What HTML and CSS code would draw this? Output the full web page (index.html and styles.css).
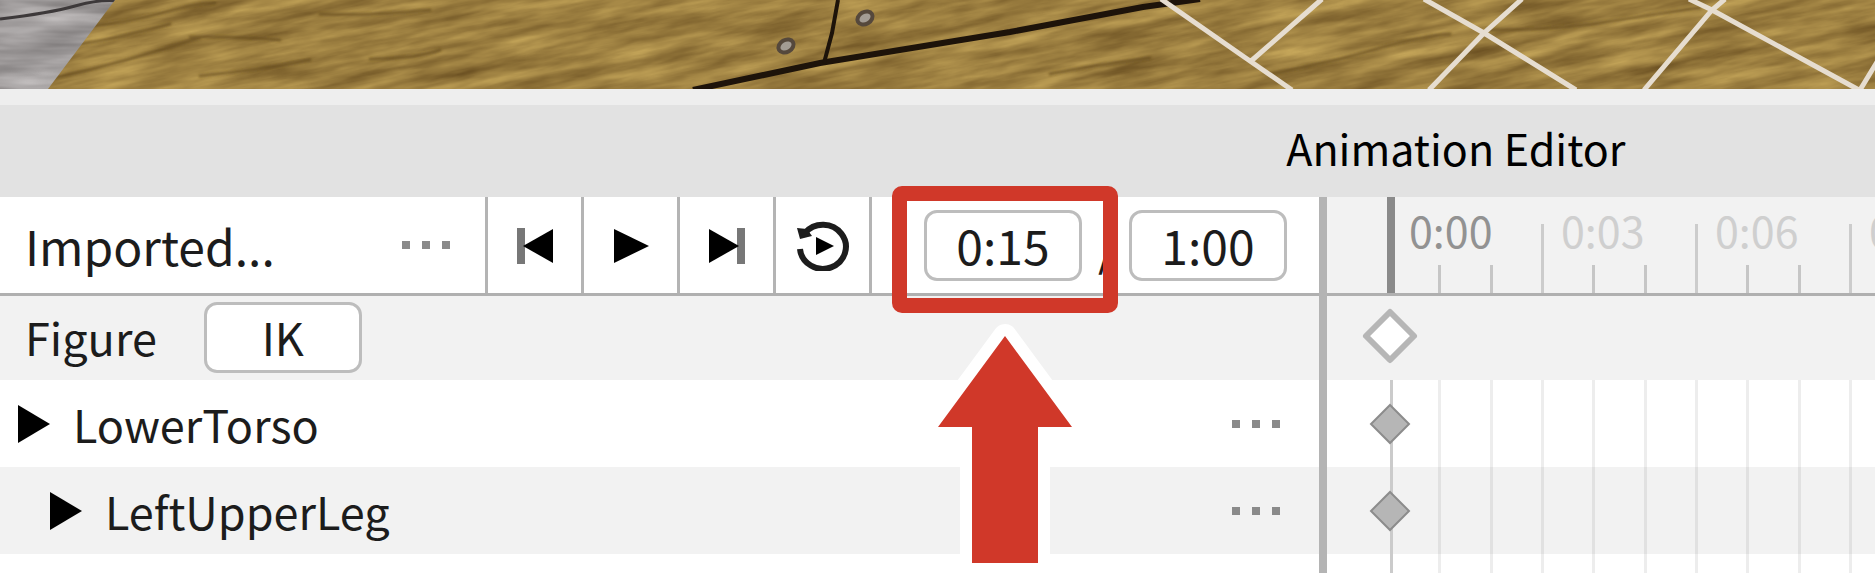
FILE: index.html
```html
<!DOCTYPE html>
<html lang="en">
<head>
<meta charset="utf-8">
<title>Animation Editor</title>
<link rel="stylesheet" href="styles.css">
</head>
<body>
<svg class="scene" viewBox="0 0 1875 89" preserveAspectRatio="xMidYMid slice" aria-hidden="true">
  <defs>
    <filter id="wood" x="0" y="0" width="1" height="1" color-interpolation-filters="sRGB">
      <feTurbulence type="fractalNoise" baseFrequency="0.012 0.08" numOctaves="4" seed="8"/>
      <feColorMatrix values="0.42 0 0 0 0.4  0.4 0 0 0 0.295  0.26 0 0 0 0.12  0 0 0 0 1"/>
    </filter>
    <filter id="stone" x="0" y="0" width="1" height="1" color-interpolation-filters="sRGB">
      <feTurbulence type="fractalNoise" baseFrequency="0.012 0.08" numOctaves="3" seed="3"/>
      <feColorMatrix values="0.35 0 0 0 0.44  0.35 0 0 0 0.425  0.35 0 0 0 0.425  0 0 0 0 1"/>
    </filter>
    <filter id="soft" x="-5%" y="-20%" width="110%" height="140%"><feGaussianBlur stdDeviation="1"/></filter>
    <clipPath id="slab"><path d="M0 0H115L48 89H0Z"/></clipPath>
  </defs>
  <rect width="1875" height="89" fill="#9c7f40"/>
  <g transform="rotate(-11 937 44)"><rect x="-50" y="-200" width="1980" height="480" filter="url(#wood)"/></g>
  <g fill="none" stroke="#60461a" stroke-width="3" stroke-linecap="round" opacity=".6" filter="url(#soft)">
    <path d="M52 78Q100 68 150 53T200 38M92 26Q130 22 165 12T215 3M80 44Q120 38 170 24M190 37Q230 36 280 40M320 14Q370 16 430 10M200 76Q260 70 310 60M370 59Q420 58 440 50M1270 74Q1340 60 1380 48T1450 34M1490 30Q1560 30 1620 20T1700 8M1050 74Q1100 64 1150 58"/>
  </g>
  <g clip-path="url(#slab)">
    <rect width="120" height="89" filter="url(#stone)"/>
    <path d="M0 19Q50 13 75 6T118 1" fill="none" stroke="#3d393a" stroke-width="3"/>
  </g>
  <g fill="none" stroke="#1d130a">
    <path d="M693 90L820 63L1010 32L1143 7L1200 -1" stroke-width="6"/>
    <path d="M838 0L832 33L824 63" stroke-width="4"/>
  </g>
  <g stroke="#55483c" stroke-width="4" fill="#a39c94">
    <ellipse cx="865" cy="18" rx="8" ry="6" transform="rotate(-30 865 18)"/>
    <ellipse cx="786" cy="46" rx="8" ry="6" transform="rotate(-30 786 46)"/>
  </g>
  <g fill="none" stroke="#e6ddd0" stroke-width="5">
    <path d="M1161 -1L1250 61L1292 90M1322 -1L1250 62M1424 -1L1484 33L1576 90M1522 -1L1484 33L1429 90M1689 -1L1712 10L1859 90M1725 -1L1712 10L1644 90M1877 62L1860 90"/>
  </g>
</svg>

<header class="titlebar"><h1 class="title">Animation Editor</h1></header>

<main class="editor">
  <section class="tracks">
    <div class="toolbar">
      <span class="clip-name">Imported...</span>
      <button class="more" aria-label="Clip options"><i></i><i></i><i></i></button>
      <div class="transport">
        <button class="tool" aria-label="Go to first frame"><svg width="36" height="36" viewBox="0 0 36 36"><path fill="#777" d="M0 0H8V36H0Z"/><path d="M36 1V35L6 18Z"/></svg></button>
        <button class="tool" aria-label="Play"><svg width="36" height="36" viewBox="0 0 36 36"><path d="M1 1V35L36 18Z"/></svg></button>
        <button class="tool" aria-label="Go to last frame"><svg width="36" height="36" viewBox="0 0 36 36"><path fill="#777" d="M28 0H36V36H28Z"/><path d="M0 1V35L30 18Z"/></svg></button>
        <button class="tool" aria-label="Loop"><svg width="54" height="50" viewBox="0 0 54 50"><path d="M4 28A23 22 0 1 0 9 12" fill="none" stroke="#1c1c1c" stroke-width="6"/><path d="M1 7L4 18L16 15L11 8Z" fill="#1c1c1c"/><path d="M20 16V34L38 25Z"/></svg></button>
      </div>
      <div class="times">
        <div class="current">
          <input class="box" type="text" value="0:15" aria-label="Current time">
          <span class="callout"></span>
          <svg class="arrow" width="180" height="262" viewBox="0 0 180 262" aria-hidden="true"><path d="M90 24L157 115H123V251H57V115H23Z" fill="none" stroke="#fff" stroke-width="24" stroke-linejoin="round"/><path d="M90 24L157 115H123V251H57V115H23Z" fill="#d03829"/></svg>
        </div>
        <span class="slash">/</span>
        <input class="box" type="text" value="1:00" aria-label="Clip length">
      </div>
    </div>
    <div class="row figure"><span>Figure</span><button class="box">IK</button></div>
    <div class="row plain">
      <button class="expand" aria-label="Expand LowerTorso"><svg width="32" height="38" viewBox="0 0 32 38"><path d="M0 0V38L32 19Z"/></svg></button>
      <span class="joint">LowerTorso</span>
      <button class="more" aria-label="LowerTorso options"><i></i><i></i><i></i></button>
    </div>
    <div class="row child">
      <button class="expand" aria-label="Expand LeftUpperLeg"><svg width="32" height="38" viewBox="0 0 32 38"><path d="M0 0V38L32 19Z"/></svg></button>
      <span class="joint">LeftUpperLeg</span>
      <button class="more" aria-label="LeftUpperLeg options"><i></i><i></i><i></i></button>
    </div>
  </section>
  <div class="divider"></div>
  <section class="timeline">
    <div class="ruler">
      <span class="playhead"></span>
      <span class="beat now">0:00</span>
      <span class="beat">0:03</span>
      <span class="beat">0:06</span>
      <span class="beat">0:09</span>
    </div>
    <div class="lane summary"><svg class="key" width="58" height="58" viewBox="0 0 58 58"><path d="M29 5L53 29L29 53L5 29Z" fill="#fff" stroke="#b6b6b6" stroke-width="6" stroke-linejoin="round"/></svg></div>
    <div class="lane plain grid"><svg class="key" width="42" height="42" viewBox="0 0 42 42"><path d="M21 2L40 21L21 40L2 21Z" fill="#b6b6b6" stroke="#8c8c8c" stroke-width="2"/></svg></div>
    <div class="lane grid"><svg class="key" width="42" height="42" viewBox="0 0 42 42"><path d="M21 2L40 21L21 40L2 21Z" fill="#b6b6b6" stroke="#8c8c8c" stroke-width="2"/></svg></div>
    <div class="lane plain grid rest"></div>
  </section>
</main>
</body>
</html>
```
FILE: styles.css
```css
* { box-sizing: border-box; }

body {
  margin: 0;
  min-height: 100vh;
  display: flex;
  flex-direction: column;
  overflow: hidden;
  background: #fff;
  color: #1c1c1c;
  font: 48px/64px "Noto Sans CJK SC", "Noto Sans", sans-serif;
}

button, input {
  margin: 0;
  padding: 0;
  border: 0;
  background: none;
  color: inherit;
  font: inherit;
}

svg { display: block; }

.scene {
  width: 100%;
  height: 89px;
  flex: none;
}

.titlebar {
  height: 108px;
  flex: none;
  display: flex;
  align-items: center;
  padding: 0 0 8px 68.6%;
  border-top: 16px solid #eee;
  background: #e2e2e2;
}

.title {
  margin: 0;
  color: #000;
  font-size: 43px;
  font-weight: 400;
  white-space: nowrap;
}

.editor {
  flex: 1;
  display: grid;
  grid-template-columns: minmax(0, 1319fr) 8px minmax(0, 548fr);
}

.divider { background: #b4b4b4; }

.toolbar, .ruler {
  height: 99px;
  display: flex;
  border-bottom: 3px solid #b0b0b0;
}

.toolbar {
  align-items: center;
  padding-left: 25px;
}

.clip-name { flex: 1; }

.more {
  display: flex;
  gap: 12px;
  padding: 8px 0;
}

.more i {
  width: 8px;
  height: 8px;
  background: #8a8a8a;
}

.transport {
  align-self: stretch;
  display: flex;
  margin-left: 35px;
  border-left: 3px solid #b4b4b4;
}

.tool {
  width: 96px;
  display: flex;
  align-items: center;
  justify-content: center;
  padding-top: 2px;
  border-right: 3px solid #b4b4b4;
}

.times {
  display: flex;
  align-items: center;
  padding: 0 32px 0 52px;
}

.box {
  display: block;
  width: 158px;
  height: 71px;
  padding-bottom: 3px;
  border: 3px solid #bdbdbd;
  border-radius: 13px;
  background: #fff;
  text-align: center;
}

.slash {
  width: 47px;
  padding-left: 4px;
  text-align: center;
}

.current { position: relative; }

.callout {
  position: absolute;
  inset: -24px -36px -32px -32px;
  border: 15px solid #d03829;
  border-radius: 10px;
  z-index: 1;
}

.arrow {
  position: absolute;
  top: 102px;
  left: -9px;
}

.row, .lane { height: 87px; background: #f2f2f2; }

.row {
  display: flex;
  align-items: center;
  padding-right: 39px;
  font-size: 45px;
}

.figure {
  height: 84px;
  gap: 47px;
  padding: 0 25px 2px;
}

.summary { height: 84px; padding-bottom: 4px; }

.row.plain, .lane.plain { background-color: #fff; }

.row.plain { padding-left: 18px; }

.child { padding-left: 50px; }

.joint {
  flex: 1;
  padding-left: 23px;
}

.timeline {
  overflow: hidden;
  display: flex;
  flex-direction: column;
}

.ruler {
  position: relative;
  flex: none;
  padding-left: 60px;
  background: #f2f2f2;
}

.playhead {
  position: absolute;
  top: 0;
  bottom: 0;
  left: 60px;
  width: 8px;
  background: #8a8a8a;
}

.beat {
  flex: 0 0 154px;
  padding-left: 20px;
  color: #cfcfcf;
  font-size: 43px;
  background:
    linear-gradient(#ccc, #ccc) 0 100% / 3px 69px no-repeat,
    linear-gradient(#c6c6c6, #c6c6c6) 51px 100% / 3px 28px no-repeat,
    linear-gradient(#c6c6c6, #c6c6c6) 103px 100% / 3px 28px no-repeat;
}

.now { padding-left: 22px; color: #929292; }

.lane {
  display: flex;
  align-items: center;
  flex: none;
}

.key { margin-left: 42px; }

.summary .key { margin-left: 34px; }

/* One vertical line per frame; the origin line is darker and nothing is drawn before it. */
.grid {
  background-image:
    linear-gradient(#cbcbcb, #cbcbcb),
    linear-gradient(#f2f2f2, #f2f2f2),
    linear-gradient(90deg, rgba(0, 0, 0, .07) 3px, transparent 3px 51px, rgba(0, 0, 0, .07) 51px 54px, transparent 54px 103px, rgba(0, 0, 0, .07) 103px 106px, transparent 106px);
  background-position: 63px 0, 0 0, 60px 0;
  background-size: 3px 100%, 63px 100%, 154px 100%;
  background-repeat: no-repeat, no-repeat, repeat-x;
}

.grid.plain {
  background-image:
    linear-gradient(#cbcbcb, #cbcbcb),
    linear-gradient(#fff, #fff),
    linear-gradient(90deg, rgba(0, 0, 0, .07) 3px, transparent 3px 51px, rgba(0, 0, 0, .07) 51px 54px, transparent 54px 103px, rgba(0, 0, 0, .07) 103px 106px, transparent 106px);
}

.rest { height: auto; flex: 1; }
```
